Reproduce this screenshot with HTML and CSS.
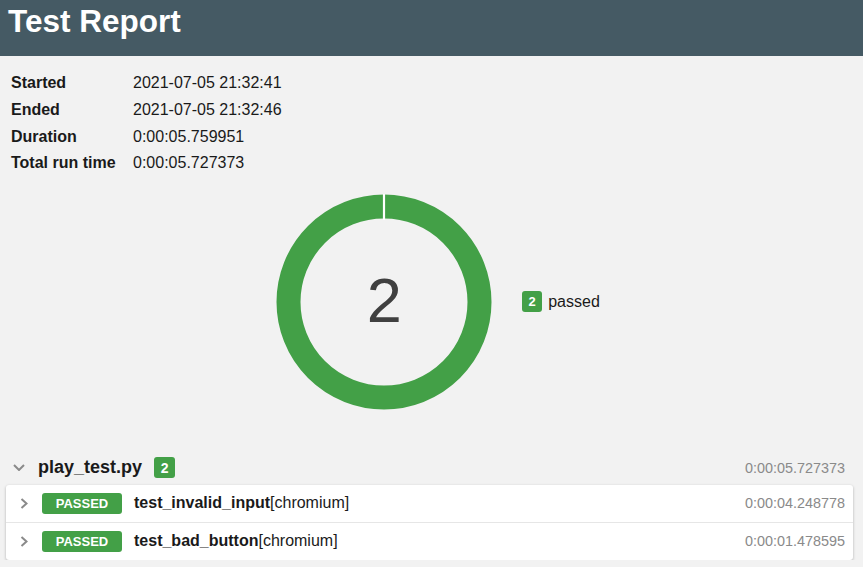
FILE: index.html
```html
<!DOCTYPE html>
<html lang="en">
<head>
<meta charset="utf-8">
<title>Test Report</title>
<link rel="stylesheet" href="styles.css">
</head>
<body>
<header class="topbar">
  <h1 class="title">Test Report</h1>
</header>

<section class="info">
  <div class="info-label">Started</div><div class="info-value">2021-07-05 21:32:41</div>
  <div class="info-label">Ended</div><div class="info-value">2021-07-05 21:32:46</div>
  <div class="info-label">Duration</div><div class="info-value">0:00:05.759951</div>
  <div class="info-label">Total run time</div><div class="info-value">0:00:05.727373</div>
</section>

<section class="summary">
  <div class="donut">
    <svg class="donut-svg" width="216" height="216" viewBox="0 0 216 216">
      <circle cx="108" cy="108" r="95.5" fill="none" stroke="#43a047" stroke-width="24"/>
      <line x1="108" y1="0" x2="108" y2="26" stroke="#ffffff" stroke-width="2.2"/>
    </svg>
    <div class="donut-number">2</div>
  </div>
  <div class="legend">
    <span class="badge badge-legend">2</span>
    <span class="legend-text">passed</span>
  </div>
</section>

<section class="group">
  <div class="group-head">
    <svg class="chev-down" width="12" height="7" viewBox="0 0 12 7">
      <path d="M1 1 L6 6 L11 1" fill="none" stroke="#8a8a8a" stroke-width="2"/>
    </svg>
    <span class="group-name">play_test.py</span>
    <span class="badge badge-group">2</span>
    <span class="time group-time">0:00:05.727373</span>
  </div>
  <div class="card">
    <div class="row">
      <svg class="chev-right" width="8" height="11" viewBox="0 0 8 11">
        <path d="M1.5 1 L6.5 5.5 L1.5 10" fill="none" stroke="#8a8a8a" stroke-width="2"/>
      </svg>
      <span class="status">PASSED</span>
      <span class="test-name"><b>test_invalid_input</b>[chromium]</span>
      <span class="time">0:00:04.248778</span>
    </div>
    <div class="row">
      <svg class="chev-right" width="8" height="11" viewBox="0 0 8 11">
        <path d="M1.5 1 L6.5 5.5 L1.5 10" fill="none" stroke="#8a8a8a" stroke-width="2"/>
      </svg>
      <span class="status">PASSED</span>
      <span class="test-name"><b>test_bad_button</b>[chromium]</span>
      <span class="time">0:00:01.478595</span>
    </div>
  </div>
</section>
</body>
</html>
```
FILE: styles.css
```css
* { box-sizing: border-box; }

html, body {
  margin: 0;
  padding: 0;
  background: #f2f2f2;
  font-family: "Liberation Sans", Arial, sans-serif;
  color: #1a1a1a;
}

.topbar {
  height: 56px;
  background: #455a64;
  padding: 0 8px;
}

.title {
  margin: 0;
  font-size: 31.5px;
  line-height: 43px;
  font-weight: bold;
  color: #ffffff;
}

.info {
  display: grid;
  grid-template-columns: 122px auto;
  grid-auto-rows: 26.67px;
  align-items: center;
  padding: 14px 0 0 11px;
  font-size: 16px;
}

.info-label {
  font-weight: bold;
}

.summary {
  display: flex;
  align-items: center;
  justify-content: center;
  gap: 30px;
  margin-top: 17px;
  padding-left: 13px;
}

.donut {
  display: grid;
  width: 216px;
  height: 216px;
}

.donut-svg,
.donut-number {
  grid-area: 1 / 1;
}

.donut-number {
  display: flex;
  align-items: center;
  justify-content: center;
  font-size: 63px;
  color: #404040;
  padding-bottom: 4px;
}

.legend {
  display: flex;
  align-items: center;
  gap: 6px;
  font-size: 16px;
}

.badge {
  display: inline-flex;
  align-items: center;
  justify-content: center;
  background: #43a047;
  color: #ffffff;
  font-weight: bold;
  border-radius: 3px;
}

.badge-legend {
  width: 20px;
  height: 21px;
  font-size: 13px;
}

.group {
  margin-top: 45px;
}

.group-head {
  display: flex;
  align-items: center;
  height: 26px;
  padding: 0 18px 0 13px;
}

.chev-down {
  margin-right: 13px;
}

.group-name {
  font-size: 18px;
  font-weight: bold;
}

.badge-group {
  width: 21px;
  height: 21px;
  font-size: 14px;
  margin-left: 12px;
}

.time {
  margin-left: auto;
  font-size: 14.4px;
  color: #8a8a8a;
}

.card {
  margin: 4px 10px 0 6px;
  background: #ffffff;
  border-radius: 3px;
  box-shadow: 0 1px 3px rgba(0, 0, 0, 0.28);
}

.row {
  display: flex;
  align-items: center;
  height: 37px;
  padding: 0 8px 0 14px;
}

.row + .row {
  border-top: 1px solid #e6e6e6;
  height: 38px;
}

.status {
  display: inline-flex;
  align-items: center;
  justify-content: center;
  width: 80px;
  height: 21px;
  margin-left: 14px;
  background: #43a047;
  color: #ffffff;
  font-size: 13px;
  font-weight: bold;
  border-radius: 3px;
}

.test-name {
  margin-left: 12px;
  font-size: 16px;
}
```
